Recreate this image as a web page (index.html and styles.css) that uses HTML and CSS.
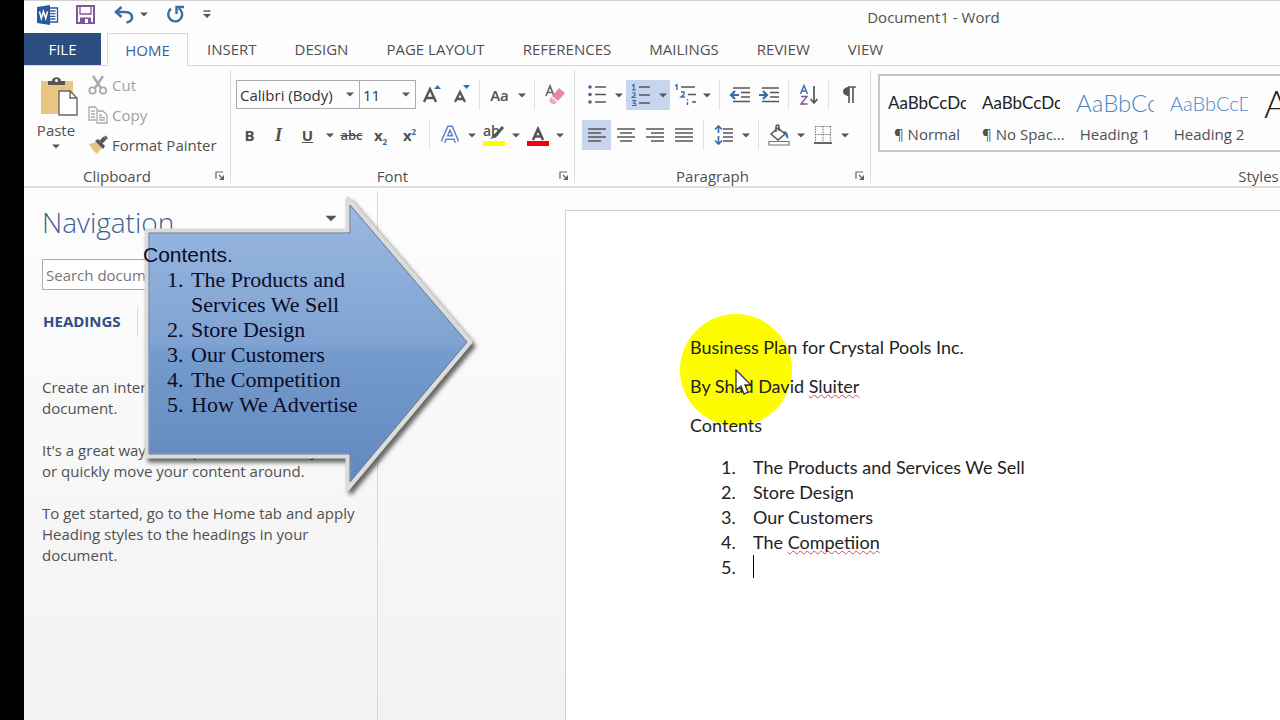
FILE: index.html
```html
<!DOCTYPE html>
<html lang="en">
<head>
  <meta charset="UTF-8">
  <meta name="viewport" content="width=device-width, initial-scale=1.0">
  <title>Document1 - Word</title>
  <link rel="stylesheet" href="styles.css">
</head>
<body>

<!-- shared icons -->
<svg class="defs" width="0" height="0" aria-hidden="true">
  <symbol id="down" viewBox="0 0 8 5"><path d="M0 0.5h8L4 4.5z" fill="#555"/></symbol>
  <symbol id="launcher" viewBox="0 0 10 10"><path d="M1 8V1h7M4 4l4 4" fill="none" stroke="#666" stroke-width="1.2"/><path d="M9 4v5H4z" fill="#666"/></symbol>
</svg>

<div class="app">
  <header class="titlebar">
    <div class="quick">
      <svg class="word" width="22" height="20" viewBox="0 0 22 20">
        <path d="M11 3h9.500v14H11" fill="#fff" stroke="#2b579a" stroke-width="1.300"/>
        <path d="M13 6h5.500M13 8.700h5.500M13 11.400h5.500M13 14h5.500" stroke="#2b579a" stroke-width="1.300"/>
        <path d="M0 2l13-2v20L0 18z" fill="#2b579a"/>
        <path d="M2.500 6.500l1.800 7 2.200-7 2.200 7 1.800-7" fill="none" stroke="#fff" stroke-width="1.500"/>
      </svg>
      <button class="q-btn save" aria-label="Save"><svg width="19" height="19" viewBox="0 0 19 19"><path d="M1 1h17v17H1z" fill="#fff" stroke="#80549a" stroke-width="2"/><path d="M4 1v8h11V1" fill="none" stroke="#80549a" stroke-width="1.300"/><path d="M4 12.500h11V18H4z" fill="#80549a"/><path d="M9 14h3v4H9z" fill="#fff"/></svg></button>
      <button class="q-btn undo" aria-label="Undo"><svg width="20" height="18" viewBox="0 0 20 18"><path d="M2 6h9c5 0 7 3 7 5.500S15.500 16 12.500 16.500" fill="none" stroke="#3a6ea5" stroke-width="2.600"/><path d="M7.500 1L2 6l5.500 5" fill="none" stroke="#3a6ea5" stroke-width="2.600"/></svg></button>
      <button class="q-btn more" aria-label="Undo list"><svg width="8" height="5"><use href="#down"/></svg></button>
      <button class="q-btn redo" aria-label="Repeat"><svg width="19" height="19" viewBox="0 0 19 19"><path d="M12.500 3.200A7 7 0 1 1 5 3.800" fill="none" stroke="#3a6ea5" stroke-width="2.400"/><path d="M10.500 9V2H18" fill="none" stroke="#3a6ea5" stroke-width="2.400"/></svg></button>
      <button class="q-btn" aria-label="Customize"><svg width="8" height="9" viewBox="0 0 8 9"><path d="M0.500 1h7" stroke="#555" stroke-width="1.400"/><path d="M0 4h8L4 8z" fill="#555"/></svg></button>
    </div>
    <div class="doc-title">Document1 - Word</div>
  </header>

  <nav class="tabs">
    <button class="tab file">FILE</button>
    <button class="tab active">HOME</button>
    <button class="tab">INSERT</button>
    <button class="tab">DESIGN</button>
    <button class="tab">PAGE LAYOUT</button>
    <button class="tab">REFERENCES</button>
    <button class="tab">MAILINGS</button>
    <button class="tab">REVIEW</button>
    <button class="tab">VIEW</button>
  </nav>

  <div class="ribbon">
    <section class="group clipboard">
      <div class="group-body">
        <button class="paste">
          <svg width="38" height="40" viewBox="0 0 38 40"><path d="M1 5h32v33H1z" fill="#e9c483"/><path d="M8 9V5h4c0-5 9-5 9 0h4v4z" fill="#555"/><circle cx="16.500" cy="4.500" r="1.500" fill="#fff"/><path d="M19 15h11l7 7v17H19z" fill="#fff" stroke="#666" stroke-width="1.400"/><path d="M30 15v7h7" fill="none" stroke="#666" stroke-width="1.400"/></svg>
          <span>Paste</span>
          <svg width="8" height="5"><use href="#down"/></svg>
        </button>
        <div class="clip-list">
          <button class="clip off"><svg width="20" height="20" viewBox="0 0 20 20"><path d="M5 1l8 12M15 1L7 13" stroke="#aaa" stroke-width="2.400"/><circle cx="4.500" cy="15.500" r="3.200" fill="none" stroke="#aaa" stroke-width="1.800"/><circle cx="15" cy="15.500" r="3.200" fill="none" stroke="#aaa" stroke-width="1.800"/></svg>Cut</button>
          <button class="clip off"><svg width="20" height="20" viewBox="0 0 20 20"><path d="M8 15H1V2h6l3 3M3 6h4M3 9h4M3 12h4" fill="none" stroke="#aaa" stroke-width="1.300"/><path d="M9 6h6l4 4v8H9z" fill="#fff" stroke="#aaa" stroke-width="1.300"/><path d="M11 10h3M11 12.500h6M11 15h6" stroke="#aaa" stroke-width="1.300"/></svg>Copy</button>
          <button class="clip"><svg width="20" height="20" viewBox="0 0 20 20"><path d="M1 9l7-2 6 6-5 6c-3-2-6-6-8-10z" fill="#e9c483"/><path d="M7 6l3-2 7 7-2 3z" fill="#555"/><path d="M13 7l4-4" stroke="#555" stroke-width="4"/><path d="M17 1l2 3" stroke="#555" stroke-width="2"/></svg>Format Painter</button>
        </div>
      </div>
      <footer class="group-foot"><span>Clipboard</span><button aria-label="Clipboard options"><svg width="10" height="10"><use href="#launcher"/></svg></button></footer>
    </section>

    <section class="group font">
      <div class="group-body rows">
        <div class="row">
          <div class="combo family">
            <select aria-label="Font"><option>Calibri (Body)</option></select>
            <svg width="8" height="5"><use href="#down"/></svg>
          </div>
          <div class="combo size">
            <select aria-label="Font size"><option>11</option></select>
            <svg width="8" height="5"><use href="#down"/></svg>
          </div>
          <button class="tool" aria-label="Grow font"><svg width="20" height="22" viewBox="0 0 20 22"><path d="M3 18L9 5l6 13M5 14h8" fill="none" stroke="#555" stroke-width="2.400"/><path d="M13 5l3.500-4L20 5z" fill="#3a6ea5"/></svg></button>
          <button class="tool" aria-label="Shrink font"><svg width="20" height="22" viewBox="0 0 20 22"><path d="M5 18L10 8l5 10M7 15h6" fill="none" stroke="#555" stroke-width="2.300"/><path d="M13 1h7l-3.500 4z" fill="#3a6ea5"/></svg></button>
          <i class="sep"></i>
          <button class="tool case">Aa</button><button class="arrow" aria-label="Case list"><svg width="8" height="5"><use href="#down"/></svg></button>
          <i class="sep"></i>
          <button class="tool" aria-label="Clear formatting"><svg width="20" height="22" viewBox="0 0 20 22"><path d="M1 12L5 2l4 10M2.500 8.500h5" fill="none" stroke="#667" stroke-width="1.700"/><path d="M14 4l6 5-7 8-6-5z" fill="#e58aa6"/><path d="M6 13l6 5-2 2H7l-3-3z" fill="#eda9bd"/></svg></button>
        </div>
        <div class="row">
          <button class="tool bold">B</button>
          <button class="tool italic">I</button>
          <button class="tool under">U</button><button class="arrow" aria-label="Underline list"><svg width="8" height="5"><use href="#down"/></svg></button>
          <button class="tool strike">abc</button>
          <button class="tool script"><span>x<sub>2</sub></span></button>
          <button class="tool script"><span>x<sup>2</sup></span></button>
          <i class="sep"></i>
          <button class="tool" aria-label="Text effects"><svg width="20" height="20" viewBox="0 0 20 20"><path d="M3 17L9 3h2l6 14M6 12.500h8" fill="none" stroke="#5b87bd" stroke-width="5"/><path d="M3 17L9 3h2l6 14M6 12.500h8" fill="none" stroke="#fff" stroke-width="2"/></svg></button><button class="arrow" aria-label="Effects list"><svg width="8" height="5"><use href="#down"/></svg></button>
          <button class="tool mark"><span>ab</span><svg width="22" height="22" viewBox="0 0 22 22"><path d="M20 3l-9 10" stroke="#555" stroke-width="3"/><path d="M11 10l3 3-7 2z" fill="#555"/><path d="M0 17h22v5H0z" fill="#ff0"/></svg></button><button class="arrow" aria-label="Highlight list"><svg width="8" height="5"><use href="#down"/></svg></button>
          <button class="tool" aria-label="Font color"><svg width="22" height="22" viewBox="0 0 22 22"><path d="M6 16l5-11 5 11M7.500 12.500h7" fill="none" stroke="#555" stroke-width="2.600"/><path d="M0 17h22v5H0z" fill="#f00012"/></svg></button><button class="arrow" aria-label="Color list"><svg width="8" height="5"><use href="#down"/></svg></button>
        </div>
      </div>
      <footer class="group-foot"><span>Font</span><button aria-label="Font options"><svg width="10" height="10"><use href="#launcher"/></svg></button></footer>
    </section>

    <section class="group paragraph">
      <div class="group-body rows">
        <div class="row">
          <button class="tool" aria-label="Bullets"><svg width="20" height="22" viewBox="0 0 20 22"><path d="M8 3h11M8 10.500h11M8 18h11" stroke="#555" stroke-width="1.600"/><g fill="#4d6285"><circle cx="3" cy="3" r="1.800"/><circle cx="3" cy="10.500" r="1.800"/><circle cx="3" cy="18" r="1.800"/></g></svg></button><button class="arrow" aria-label="Bullets list"><svg width="8" height="5"><use href="#down"/></svg></button>
          <button class="tool on" aria-label="Numbering"><svg width="20" height="24" viewBox="0 0 20 24"><path d="M8 4h11M8 12h11M8 20h11" stroke="#555" stroke-width="1.600"/><path d="M1 3l2-1.500V7M1 7h4M1 10h3v2L1 14.500h4M1 17.500h3.500L2.500 20q3 0 2 2.500H1" fill="none" stroke="#3a6ea5" stroke-width="1.200"/></svg></button><button class="arrow on" aria-label="Numbering list"><svg width="8" height="5"><use href="#down"/></svg></button>
          <button class="tool" aria-label="Multilevel list"><svg width="22" height="22" viewBox="0 0 22 22"><path d="M7 3h14M14 10.500h8M18 18h4" stroke="#555" stroke-width="1.600"/><path d="M1 2l2-1.500V6M7 8h3v2.500L7 13h4M13.500 15v1.500M13.500 18v3" fill="none" stroke="#3a6ea5" stroke-width="1.400"/></svg></button><button class="arrow" aria-label="Multilevel choices"><svg width="8" height="5"><use href="#down"/></svg></button>
          <i class="sep"></i>
          <button class="tool" aria-label="Decrease indent"><svg width="22" height="18" viewBox="0 0 22 18"><path d="M4 2h17M12 6.500h9M12 11h9M4 15.500h17" stroke="#555" stroke-width="1.600"/><path d="M10 9H2M6 5L2 9l4 4" fill="none" stroke="#3a6ea5" stroke-width="2.200"/></svg></button>
          <button class="tool" aria-label="Increase indent"><svg width="22" height="18" viewBox="0 0 22 18"><path d="M4 2h17M12 6.500h9M12 11h9M4 15.500h17" stroke="#555" stroke-width="1.600"/><path d="M1 9h8M5 5l4 4-4 4" fill="none" stroke="#3a6ea5" stroke-width="2.200"/></svg></button>
          <i class="sep"></i>
          <button class="tool" aria-label="Sort"><svg width="20" height="22" viewBox="0 0 20 22"><path d="M1.500 10L5 1.500 8.500 10M3 7h4" fill="none" stroke="#3a6ea5" stroke-width="1.400"/><path d="M2 12.500h6L2 20h6.500" fill="none" stroke="#80549a" stroke-width="1.400"/><path d="M15 2v17M11.500 15l3.500 4 3.500-4" fill="none" stroke="#555" stroke-width="1.700"/></svg></button>
          <i class="sep"></i>
          <button class="tool" aria-label="Show marks"><svg width="14" height="18" viewBox="0 0 14 18"><path d="M7 1v16M11 1v16M6 1h8" fill="none" stroke="#555" stroke-width="1.600"/><path d="M7 1v9C-1 10-1 1 7 1z" fill="#555"/></svg></button>
        </div>
        <div class="row">
          <button class="tool on" aria-label="Align left"><svg width="20" height="16" viewBox="0 0 20 16"><path d="M1 2h18M1 6h13M1 10h18M1 14h13" stroke="#555" stroke-width="1.600"/></svg></button>
          <button class="tool" aria-label="Center"><svg width="20" height="16" viewBox="0 0 20 16"><path d="M1 2h18M4 6h12M1 10h18M4 14h12" stroke="#555" stroke-width="1.600"/></svg></button>
          <button class="tool" aria-label="Align right"><svg width="20" height="16" viewBox="0 0 20 16"><path d="M1 2h18M6 6h13M1 10h18M6 14h13" stroke="#555" stroke-width="1.600"/></svg></button>
          <button class="tool" aria-label="Justify"><svg width="20" height="16" viewBox="0 0 20 16"><path d="M1 2h18M1 6h18M1 10h18M1 14h18" stroke="#555" stroke-width="1.600"/></svg></button>
          <i class="sep"></i>
          <button class="tool" aria-label="Line spacing"><svg width="20" height="22" viewBox="0 0 20 22"><path d="M9 5h10M9 9h10M9 13h10M9 17h10" stroke="#555" stroke-width="1.600"/><path d="M4.500 2v7M1 5.500L4.500 2 8 5.500M4.500 12v8M1 16.500L4.500 20 8 16.500" fill="none" stroke="#3a6ea5" stroke-width="1.700"/></svg></button><button class="arrow" aria-label="Spacing list"><svg width="8" height="5"><use href="#down"/></svg></button>
          <i class="sep"></i>
          <button class="tool" aria-label="Shading"><svg width="22" height="22" viewBox="0 0 22 22"><path d="M3 10l7-6 7 6-7 6z" fill="#fff" stroke="#555" stroke-width="1.500"/><path d="M8 8V2q2-2 3 0v5" fill="none" stroke="#555" stroke-width="1.500"/><path d="M15 7q6 0 5 8-2-1-3-5z" fill="#3a6ea5"/><path d="M1 17.500h20v3.500H1z" fill="#fff" stroke="#777" stroke-width="1.200"/></svg></button><button class="arrow" aria-label="Shading list"><svg width="8" height="5"><use href="#down"/></svg></button>
          <button class="tool" aria-label="Borders"><svg width="18" height="20" viewBox="0 0 18 20"><path d="M1 1.500h16M1 9.500h16M1.500 1v16M9 1v16M16.500 1v16" fill="none" stroke="#777" stroke-width="1.100" stroke-dasharray="1.500 1.200"/><path d="M0 18h18" stroke="#555" stroke-width="1.800"/></svg></button><button class="arrow" aria-label="Borders list"><svg width="8" height="5"><use href="#down"/></svg></button>
        </div>
      </div>
      <footer class="group-foot"><span>Paragraph</span><button aria-label="Paragraph options"><svg width="10" height="10"><use href="#launcher"/></svg></button></footer>
    </section>

    <section class="group styles">
      <div class="group-body">
        <div class="gallery">
          <button class="style"><span class="sample">AaBbCcDc</span><span>¶ Normal</span></button>
          <button class="style"><span class="sample">AaBbCcDc</span><span>¶ No Spac...</span></button>
          <button class="style"><span class="sample h1">AaBbCc</span><span>Heading 1</span></button>
          <button class="style"><span class="sample h2">AaBbCcD</span><span>Heading 2</span></button>
          <button class="style" aria-label="Title"><span class="sample title">Aa</span></button>
        </div>
      </div>
      <footer class="group-foot"><span>Styles</span></footer>
    </section>
  </div>

  <main class="workspace">
    <aside class="nav-pane">
      <div class="nav-head">
        <h2>Navigation</h2>
        <button aria-label="Pane options"><svg width="12" height="7" viewBox="0 0 8 5"><use href="#down"/></svg></button>
      </div>
      <input class="search" type="text" placeholder="Search document" aria-label="Search document">
      <div class="nav-tabs">
        <button class="current">HEADINGS</button>
        <button>PAGES</button>
        <button>RESULTS</button>
      </div>
      <p>Create an interactive outline of your document.</p>
      <p>It's a great way to keep track of where you are<br>or quickly move your content around.</p>
      <p>To get started, go to the Home tab and apply Heading styles to the headings in your document.</p>
    </aside>

    <div class="canvas">
      <article class="page">
        <div class="spotlight"></div>
        <p>Business Plan for Crystal Pools Inc.</p>
        <p>By Shad David <span class="typo">Sluiter</span></p>
        <p>Contents</p>
        <ol>
          <li>The Products and Services We Sell</li>
          <li>Store Design</li>
          <li>Our Customers</li>
          <li><span>The <span class="typo">Competiion</span></span></li>
          <li><span class="caret"></span></li>
        </ol>
        <svg class="pointer" width="18" height="28" viewBox="0 0 18 28"><path d="M1 1v20l5-4 3 8 4-2-3-7h6z" fill="#fff" stroke="#333" stroke-width="1.300"/></svg>
      </article>
    </div>
  </main>

  <div class="callout">
    <svg width="340" height="308" viewBox="0 0 340 308">
      <defs>
        <linearGradient id="blue" x1="0" y1="0" x2="0" y2="1">
          <stop offset="0" stop-color="#9dbce6"/>
          <stop offset="0.500" stop-color="#80a5d6"/>
          <stop offset="0.530" stop-color="#769dd0"/>
          <stop offset="1" stop-color="#6288bf"/>
        </linearGradient>
      </defs>
      <path class="callout-shape" d="M6 41H207V9L329 152 207 298V266H6z" fill="url(#blue)" fill-opacity="0.970" stroke="#dcdcda" stroke-width="5" stroke-linejoin="round"/>
      <path d="M8 43H209V15L326 152 209 292V264H8z" fill="none" stroke="#5d7394" stroke-width="1"/>
    </svg>
    <div class="callout-text">
      <p>Contents.</p>
      <ol>
        <li>The Products and<br>Services We Sell</li>
        <li>Store Design</li>
        <li>Our Customers</li>
        <li>The Competition</li>
        <li>How We Advertise</li>
      </ol>
    </div>
  </div>
</div>

</body>
</html>
```
FILE: styles.css
```css
* {
  box-sizing: border-box;
}
body {
  margin: 0;
  background-color: #000;
  font-family: "Open Sans", "Noto Sans", sans-serif;
  font-size: 15px;
  color: #505050;
}
button {
  font: inherit;
  color: inherit;
  background: none;
  border: none;
  padding: 0;
  margin: 0;
}
p, h2, ol {
  margin: 0;
  padding: 0;
  font-weight: normal;
}
ol {
  list-style: none;
}
.defs {
  position: absolute;
}
.app {
  position: relative;
  display: flex;
  flex-direction: column;
  height: 100vh;
  margin-left: 24px;
  overflow: hidden;
  background-color: #fdfdfd;
}

/* title bar */
.titlebar {
  display: flex;
  align-items: center;
  height: 33px;
  border-top: 1px solid #d0d0d0;
}
.quick {
  display: flex;
  align-items: center;
  height: 27px;
  padding-left: 13px;
  align-self: flex-start;
}
.q-btn {
  display: flex;
}
.save {
  margin-left: 17px;
}
.undo {
  margin-left: 19px;
}
.more {
  margin-left: 6px;
}
.redo {
  margin: 0 18px;
}
.doc-title {
  flex: 1;
  padding-left: 376px;
  text-align: center;
}

/* tabs */
.tabs {
  display: flex;
  height: 33px;
  border-bottom: 1px solid #d9d9d9;
}
.tab {
  padding: 0 19px;
}
.tab.file {
  width: 77px;
  margin-right: 6px;
  background-color: #2b4d80;
  color: #fff;
}
.tab.active {
  width: 81px;
  padding: 0;
  margin-bottom: -1px;
  border: 1px solid #d9d9d9;
  border-bottom: none;
  background-color: #fdfdfd;
  color: #3a5f98;
}

/* ribbon */
.ribbon {
  display: flex;
  height: 122px;
  padding-top: 4px;
  border-bottom: 2px solid #dedede;
}
.group {
  display: flex;
  flex: none;
  flex-direction: column;
  justify-content: space-between;
  margin-bottom: 3px;
  border-right: 1px solid #dedede;
}
.group-body {
  display: flex;
}
.group-foot {
  display: flex;
  align-items: center;
  height: 15px;
}
.group-foot span {
  flex: 1;
  text-align: center;
}
.group-foot button {
  display: flex;
  justify-content: center;
  width: 20px;
}
.clipboard {
  width: 207px;
}
.paste {
  display: flex;
  flex-direction: column;
  align-items: center;
  width: 64px;
  padding-top: 6px;
}
.paste svg:first-child {
  margin-left: 6px;
}
.paste span {
  line-height: 28px;
}
.clip {
  display: flex;
  align-items: center;
  gap: 4px;
  height: 30px;
}
.clip.off {
  color: #a0a0a0;
}
.font {
  width: 344px;
}
.font .group-body {
  padding-left: 4px;
}
.paragraph {
  width: 296px;
}
.paragraph .group-body {
  padding-left: 7px;
}
.rows {
  flex-direction: column;
  gap: 10px;
  padding-top: 10px;
}
.row {
  display: flex;
  height: 30px;
}
.tool {
  display: flex;
  align-items: center;
  justify-content: center;
  width: 29px;
  height: 30px;
}
.arrow {
  display: flex;
  align-items: center;
  justify-content: center;
  width: 15px;
  height: 30px;
}
.on {
  background-color: #c7d5ee;
}
.sep {
  width: 1px;
  margin: 0 5px;
  background-color: #e2e2e2;
}
.combo {
  display: grid;
  align-items: center;
  height: 29px;
  border: 1px solid #ababab;
}
.combo select {
  grid-area: 1 / 1;
  width: 100%;
  height: 27px;
  padding: 0 3px;
  border: none;
  appearance: none;
  background: none;
  font: inherit;
  color: #333;
}
.combo svg {
  grid-area: 1 / 1;
  justify-self: end;
  margin-right: 5px;
  pointer-events: none;
}
.family {
  width: 124px;
  margin-left: 1px;
}
.size {
  width: 57px;
  margin-left: -1px;
}
.bold, .under, .script {
  font-weight: bold;
}
.case {
  font-weight: 600;
}
.italic {
  font-family: "Liberation Serif", serif;
  font-size: 18px;
  font-style: italic;
  font-weight: bold;
}
.under {
  text-decoration: underline;
}
.strike {
  font-size: 13px;
  font-weight: 600;
  text-decoration: line-through;
}
.script sub, .script sup {
  font-size: 8px;
  line-height: 0;
  color: #3a6ea5;
}
.mark {
  position: relative;
}
.mark span {
  position: absolute;
  left: 4px;
  top: 2px;
  font-size: 14px;
  line-height: 18px;
  font-weight: 600;
}

/* style gallery */
.styles {
  min-width: 776px;
}
.gallery {
  display: flex;
  flex: 1;
  height: 78px;
  margin: 4px 0 0 7px;
  border: 2px solid #c6c6c6;
}
.style {
  display: flex;
  flex-direction: column;
  width: 94px;
  padding: 11px 8px 0;
}
.style span {
  width: 100%;
  line-height: 32px;
  white-space: nowrap;
}
.style .sample {
  overflow: hidden;
  height: 32px;
  font-family: Lato, sans-serif;
  font-size: 17px;
  text-align: left;
  color: #222;
}
.style .h1 {
  font-size: 24px;
  font-weight: 300;
  color: #4a86c5;
}
.style .h2 {
  font-size: 20px;
  font-weight: 300;
  color: #4a86c5;
}
.style .title {
  font-size: 38px;
  font-weight: 300;
}

/* navigation pane */
.workspace {
  display: flex;
  flex: 1;
  min-height: 0;
  background: linear-gradient(#fdfdfd, #f2f2f3);
}
.nav-pane {
  flex: none;
  width: 354px;
  margin-top: 3px;
  padding: 11px 10px 11px 18px;
  border-right: 1px solid #d8d8d8;
  line-height: 21px;
}
.nav-head {
  display: flex;
  align-items: flex-start;
  justify-content: space-between;
  padding-right: 30px;
}
.nav-head h2 {
  font-size: 28px;
  font-weight: 300;
  line-height: 40px;
  color: #3f5f94;
}
.nav-head button {
  line-height: 28px;
}
.search {
  width: 100%;
  height: 31px;
  margin: 17px 0 16px;
  padding: 0 3px;
  border: 1px solid #ababab;
  background-color: #fff;
  font: inherit;
}
.search::placeholder {
  color: #777;
}
.nav-tabs {
  display: flex;
  height: 30px;
  margin-bottom: 41px;
}
.nav-tabs button {
  padding: 0 16px;
  border-right: 1px solid #e0e0e0;
}
.nav-tabs .current {
  padding-left: 1px;
  font-weight: bold;
  color: #2f4f85;
}
.nav-pane p {
  margin-bottom: 21px;
}

/* document */
.canvas {
  flex: 1;
  min-width: 0;
  padding: 22px 0 0 187px;
}
.page {
  position: relative;
  z-index: 0;
  height: 100%;
  padding: 124px 0 0 124px;
  border: 1px solid #d0d0d0;
  border-width: 1px 0 0 1px;
  background-color: #fff;
  font-family: Lato, sans-serif;
  font-size: 18px;
  line-height: 25px;
  color: #222;
}
.page p {
  margin-bottom: 14px;
}
.page ol {
  padding: 3px 0 0 31px;
  counter-reset: item;
}
.page li, .callout li {
  display: flex;
  counter-increment: item;
}
.page li::before {
  content: counter(item) ".";
  width: 32px;
}
.typo {
  text-decoration: underline wavy #e0434b 1px;
  text-underline-offset: 1px;
  text-decoration-skip-ink: none;
}
.caret {
  width: 1px;
  height: 23px;
  background-color: #000;
}
.spotlight {
  position: absolute;
  z-index: -1;
  left: 114px;
  top: 103px;
  width: 112px;
  height: 112px;
  border-radius: 50%;
  background-color: #fdfd00;
}
.pointer {
  position: absolute;
  left: 169px;
  top: 158px;
}

/* arrow callout over the pane */
.callout {
  position: absolute;
  left: 117px;
  top: 190px;
}
.callout svg {
  display: block;
}
.callout-shape {
  filter: drop-shadow(3px 4px 2px rgba(0, 0, 0, 0.6));
}
.callout-text {
  position: absolute;
  left: 2px;
  top: 52px;
  color: #0b0b28;
  line-height: 25px;
  white-space: nowrap;
}
.callout-text p {
  font-family: "Liberation Sans", sans-serif;
  font-size: 21px;
}
.callout-text ol {
  padding-left: 24px;
  counter-reset: item;
  font-family: "Liberation Serif", serif;
  font-size: 22px;
}
.callout li::before {
  content: counter(item) ".";
  width: 24px;
}
```
